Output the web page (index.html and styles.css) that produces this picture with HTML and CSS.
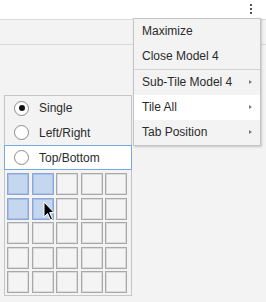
FILE: index.html
```html
<!DOCTYPE html>
<html lang="en">
<head>
  <meta charset="UTF-8">
  <title>Tile Layout</title>
  <link rel="stylesheet" href="styles.css">
</head>
<body>
  <div class="topbar">
    <span class="dots"><i></i><i></i><i></i></span>
  </div>
  <div class="tabbar"></div>

  <div class="workspace">
    <div class="layout-panel">
      <div class="opt"><span class="radio checked"></span>Single</div>
      <div class="opt"><span class="radio"></span>Left/Right</div>
      <div class="opt active"><span class="radio"></span>Top/Bottom</div>
      <div class="cells">
        <div class="cell on"></div><div class="cell on"></div><div class="cell"></div><div class="cell"></div><div class="cell"></div>
        <div class="cell on"></div><div class="cell on"></div><div class="cell"></div><div class="cell"></div><div class="cell"></div>
        <div class="cell"></div><div class="cell"></div><div class="cell"></div><div class="cell"></div><div class="cell"></div>
        <div class="cell"></div><div class="cell"></div><div class="cell"></div><div class="cell"></div><div class="cell"></div>
        <div class="cell"></div><div class="cell"></div><div class="cell"></div><div class="cell"></div><div class="cell"></div>
      </div>
    </div>
  </div>

  <ul class="menu">
    <li>Maximize</li>
    <li>Close Model 4</li>
    <li class="sep"></li>
    <li class="sub">Sub-Tile Model 4</li>
    <li class="sub hover">Tile All</li>
    <li class="sub">Tab Position</li>
  </ul>

  <svg class="pointer" width="13" height="21" viewBox="0 0 13 21">
    <path d="M1 1 L1 16 L4.5 12.5 L7.5 19 L9.5 18 L6.6 11.6 L11 11.6 Z" fill="#000" stroke="#fff" stroke-width="1"/>
  </svg>
</body>
</html>
```

FILE: styles.css
```css
body {
  margin: 0;
  background-color: #f3f3f3;
  font-family: "Liberation Sans", Arial, sans-serif;
  font-size: 12px;
  color: #2b2b2b;
  height: 302px;
  overflow: hidden;
}
.topbar {
  height: 19px;
  background-color: #ffffff;
  border-bottom: 1px solid #d9d9d9;
  display: flex;
  justify-content: flex-end;
  padding-right: 14px;
}
.dots {
  display: flex;
  flex-direction: column;
  gap: 2px;
  padding-top: 4px;
}
.dots i {
  display: block;
  width: 2px;
  height: 2px;
  background-color: #555;
}
.tabbar {
  height: 24px;
  border-bottom: 1px solid #d9d9d9;
}
.workspace {
  padding: 50px 0 0 4px;
}
.layout-panel {
  width: 126px;
  height: 199px;
  border: 1px solid #c6c6c6;
  background-color: #f3f3f3;
}
.opt {
  display: flex;
  align-items: center;
  height: 25px;
  padding-left: 9px;
  gap: 10px;
}
.opt:first-child {
  height: 24px;
}
.opt.active {
  height: 23px;
  margin: 0 -1px;
  padding-left: 9px;
  border: 1px solid #76a9de;
  background-color: #ffffff;
}
.radio {
  width: 13px;
  height: 13px;
  border: 1px solid #8a8a8a;
  border-radius: 50%;
  background-color: #ffffff;
  display: flex;
  align-items: center;
  justify-content: center;
}
.radio.checked::after {
  content: "";
  width: 6px;
  height: 6px;
  border-radius: 50%;
  background-color: #111;
}
.cells {
  display: grid;
  grid-template-columns: repeat(5, 22px);
  grid-auto-rows: 22px;
  gap: 2.5px;
  padding: 3px 0 0 2px;
}
.cell {
  box-sizing: border-box;
  border: 1px solid #a9a9a9;
  box-shadow: inset 0 0 0 1px #dcdcdc;
  background-color: #f4f4f4;
}
.cell.on {
  border-color: #8aa6d4;
  box-shadow: inset 0 0 0 1px #a9c1e8;
  background-color: #c5d6ef;
}
.menu {
  position: absolute;
  top: 18px;
  left: 133px;
  width: 126px;
  margin: 0;
  padding: 0;
  list-style: none;
  background-color: #f3f3f3;
  border: 1px solid #c4c4c4;
  box-shadow: 1px 1px 2px rgba(0, 0, 0, 0.18);
}
.menu li {
  height: 25px;
  line-height: 25px;
  padding-left: 8px;
  position: relative;
}
.menu li.sep {
  height: 1px;
  padding: 0;
  background-color: #d2d2d2;
}
.menu li.hover {
  background-color: #ffffff;
}
.menu li.sub::after {
  content: "";
  position: absolute;
  right: 8px;
  top: 10px;
  border-left: 3px solid #7a7a7a;
  border-top: 2.5px solid transparent;
  border-bottom: 2.5px solid transparent;
}
.pointer {
  position: absolute;
  left: 43px;
  top: 201px;
}
```
